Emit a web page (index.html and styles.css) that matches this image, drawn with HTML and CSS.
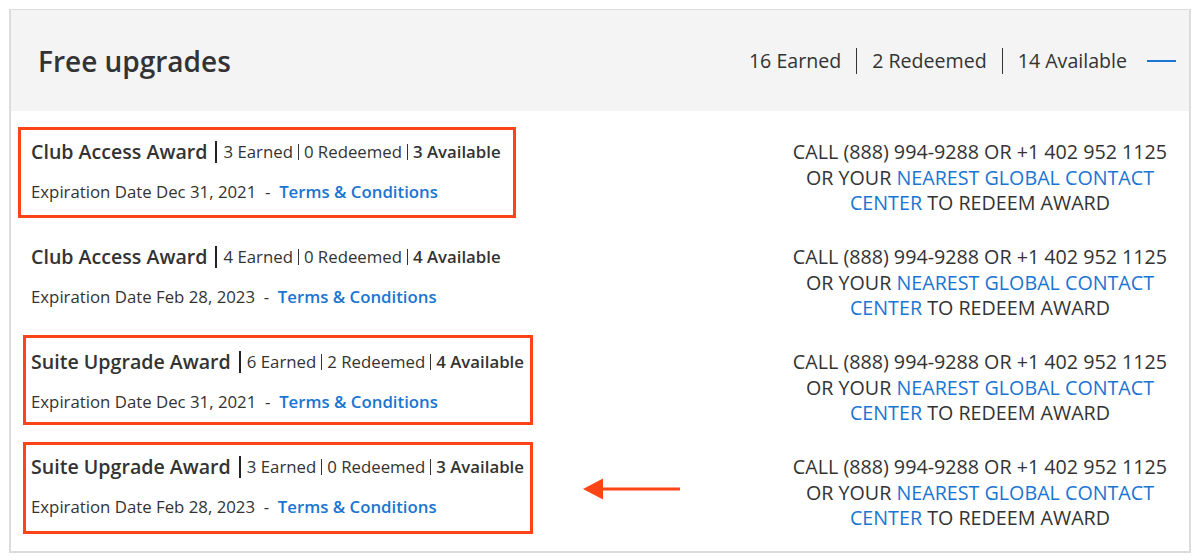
FILE: index.html
```html
<!DOCTYPE html>
<html lang="en">
<head>
    <meta charset="UTF-8">
    <meta name="viewport" content="width=device-width, initial-scale=1.0">
    <title>Free upgrades</title>
    <link rel="stylesheet" href="styles.css">
</head>
<body>
    <section class="panel">
        <header class="panel-head">
            <h2>Free upgrades</h2>
            <div class="totals">
                <span>16 Earned</span>
                <span class="sep"></span>
                <span>2 Redeemed</span>
                <span class="sep"></span>
                <span>14 Available</span>
                <span class="collapse"></span>
            </div>
        </header>
        <div class="award-list">
            <div class="award">
                <div class="award-info">
                    <div class="award-title">
                        <strong>Club Access Award</strong>
                        <span class="count">3 Earned</span>
                        <span class="count">0 Redeemed</span>
                        <span class="count avail">3 Available</span>
                    </div>
                    <p class="award-meta">Expiration Date Dec 31, 2021 &nbsp;-&nbsp; <a href="#">Terms &amp; Conditions</a></p>
                </div>
                <p class="redeem">CALL (888) 994-9288 OR +1 402 952 1125 OR YOUR <a href="#">NEAREST GLOBAL CONTACT CENTER</a> TO REDEEM AWARD</p>
            </div>
            <div class="award">
                <div class="award-info">
                    <div class="award-title">
                        <strong>Club Access Award</strong>
                        <span class="count">4 Earned</span>
                        <span class="count">0 Redeemed</span>
                        <span class="count avail">4 Available</span>
                    </div>
                    <p class="award-meta">Expiration Date Feb 28, 2023 &nbsp;-&nbsp; <a href="#">Terms &amp; Conditions</a></p>
                </div>
                <p class="redeem">CALL (888) 994-9288 OR +1 402 952 1125 OR YOUR <a href="#">NEAREST GLOBAL CONTACT CENTER</a> TO REDEEM AWARD</p>
            </div>
            <div class="award">
                <div class="award-info">
                    <div class="award-title">
                        <strong>Suite Upgrade Award</strong>
                        <span class="count">6 Earned</span>
                        <span class="count">2 Redeemed</span>
                        <span class="count avail">4 Available</span>
                    </div>
                    <p class="award-meta">Expiration Date Dec 31, 2021 &nbsp;-&nbsp; <a href="#">Terms &amp; Conditions</a></p>
                </div>
                <p class="redeem">CALL (888) 994-9288 OR +1 402 952 1125 OR YOUR <a href="#">NEAREST GLOBAL CONTACT CENTER</a> TO REDEEM AWARD</p>
            </div>
            <div class="award">
                <div class="award-info">
                    <div class="award-title">
                        <strong>Suite Upgrade Award</strong>
                        <span class="count">3 Earned</span>
                        <span class="count">0 Redeemed</span>
                        <span class="count avail">3 Available</span>
                    </div>
                    <p class="award-meta">Expiration Date Feb 28, 2023 &nbsp;-&nbsp; <a href="#">Terms &amp; Conditions</a></p>
                </div>
                <p class="redeem">CALL (888) 994-9288 OR +1 402 952 1125 OR YOUR <a href="#">NEAREST GLOBAL CONTACT CENTER</a> TO REDEEM AWARD</p>
            </div>
        </div>

        <!-- annotation marks -->
        <div class="mark mark-1"></div>
        <div class="mark mark-3"></div>
        <div class="mark mark-4"></div>
        <svg class="arrow" width="100" height="24" viewBox="0 0 100 24">
            <polygon points="0,12 20,1.5 20,22.5" fill="#ff4418"/>
            <rect x="19" y="10.5" width="78" height="3" fill="#ff4418"/>
        </svg>
    </section>
</body>
</html>
```

FILE: styles.css
```css
body {
    font-family: "Open Sans", Arial, sans-serif;
    margin: 0;
    padding: 0;
    background-color: #fff;
    color: #333;
}
.panel {
    position: relative;
    margin: 9px 9px 0 9px;
    height: 544px;
    box-sizing: border-box;
    border: 2px solid #dcdcdc;
    border-top-width: 1px;
}
.panel-head {
    display: flex;
    align-items: center;
    justify-content: space-between;
    height: 101px;
    padding: 0 13px 0 27px;
    background-color: #f4f4f4;
}
.panel-head h2 {
    margin: 0;
    font-size: 28px;
    font-weight: 600;
    color: #333;
}
.totals {
    display: flex;
    align-items: center;
    font-size: 19.6px;
}
.totals .sep {
    width: 1px;
    height: 26px;
    margin: 0 15px;
    background-color: #333;
}
.totals .collapse {
    width: 29px;
    height: 2px;
    margin-left: 20px;
    background-color: #1a75d2;
}
.award {
    display: flex;
    justify-content: space-between;
    align-items: flex-start;
    height: 105px;
    box-sizing: border-box;
    padding: 28px 9px 0 20px;
}
.award-title {
    display: flex;
    align-items: center;
    height: 26px;
}
.award-title strong {
    font-size: 19.6px;
    font-weight: 600;
    padding-right: 8px;
    margin-right: 6px;
    border-right: 2px solid #222;
    line-height: 22px;
}
.count {
    font-size: 16.8px;
    line-height: 16px;
    padding: 0 5px;
    border-left: 1px solid #333;
}
.award-title strong + .count {
    border-left: none;
    padding-left: 0;
}
.count.avail {
    font-weight: 600;
}
.award-meta {
    margin: 14px 0 0;
    font-size: 16.8px;
    line-height: 26px;
}
.award-meta a,
.redeem a {
    color: #1a75d2;
    text-decoration: none;
}
.award-meta a {
    font-weight: 600;
}
.redeem {
    width: 400px;
    margin: 0;
    font-size: 19.7px;
    line-height: 25.5px;
    text-align: center;
}
.mark {
    position: absolute;
    border: 3px solid #ff4418;
}
.mark-1 {
    left: 7px;
    top: 117px;
    width: 492px;
    height: 85px;
}
.mark-3 {
    left: 12px;
    top: 325px;
    width: 504px;
    height: 84px;
}
.mark-4 {
    left: 12px;
    top: 432px;
    width: 504px;
    height: 86px;
}
.arrow {
    position: absolute;
    left: 572px;
    top: 467px;
}
```
